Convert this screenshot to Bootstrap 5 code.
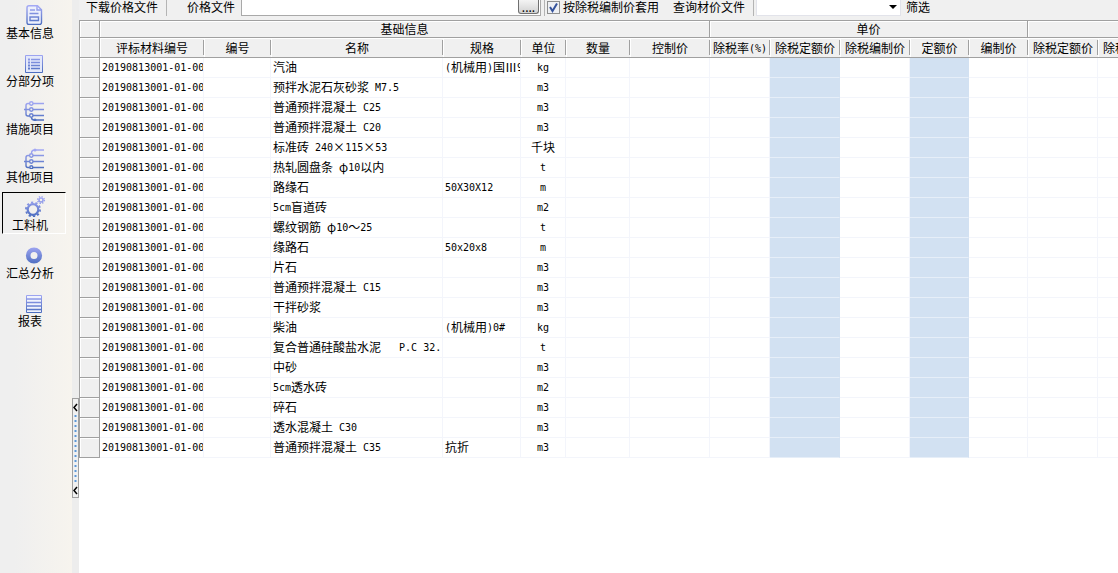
<!DOCTYPE html>
<html lang="zh-CN">
<head>
<meta charset="utf-8">
<meta name="viewport" content="width=device-width, initial-scale=1">
<title>工料机</title>
<link href="https://cdn.jsdelivr.net/npm/bootstrap@5.3.0/dist/css/bootstrap.min.css" rel="stylesheet">
<style>
  body { font-family: "Noto Sans CJK SC", sans-serif; font-size: 12px; line-height: 18px; color: #000; background: #fff; }
  .sidebar { width: 72px; background: linear-gradient(90deg, #efefef 20%, #f7f4ee); }
  .side-list { gap: 6px; }
  .side-btn { width: 64px; height: 42px; margin-left: 2px; padding: 0 8px 0 0; border: 1px solid transparent; background: none; color: #000; line-height: 16px; white-space: nowrap; }
  .side-btn svg { width: 24px; height: 24px; margin-left: 7px; flex: none; }
  .side-btn.current { border-color: #000 #fff #fff #000; }
  .splitter { width: 7px; background: #ededed; }
  .grip { width: 7px; height: 100px; margin-top: 398px; padding: 0; border: 1px solid #a0a0a0; background: #f0f0f0; }
  .grip svg { display: block; width: 5px; height: 98px; }
  .toolbar { height: 20px; padding-left: 7px; background: #f0f0f0; white-space: nowrap; line-height: 14px; }
  .toolbar > * { flex: none; }
  .tool-btn { padding: 0; border: 0; background: none; color: #000; line-height: 14px; }
  .divider { width: 1px; height: 16px; background: #b4b4b4; }
  .file-label { margin: 0 6px 0 20px; }
  .file-box { width: 300px; height: 16px; margin-right: 3px; background: #fff; border: 1px solid #a9a9a9; border-top: 0; }
  .file-box input { border: 0; outline: 0; min-width: 0; background: #fff; padding: 0 4px; }
  .browse { width: 21px; height: 14px; margin: 0 1px 0 0; padding: 0; line-height: 12px; border: 1px solid #707070; border-top: 0; border-radius: 0 0 3px 3px; background: linear-gradient(#f4f4f4, #d2d2d2); }
  .tick-label { margin: 0 14px 0 2px; }
  .tick { appearance: none; width: 13px; height: 13px; margin: 0 3px 0 0; border: 1px solid #8e8f8f; background: #eef0f4; }
  .tick:checked { background: #eef0f4 url("data:image/svg+xml,%3Csvg xmlns='http://www.w3.org/2000/svg' viewBox='0 0 11 11'%3E%3Cpath d='M2 5l2.500 4L9 1.500' fill='none' stroke='%2335539c' stroke-width='2'/%3E%3C/svg%3E"); }
  .price-select { width: 145px; height: 16px; margin: 0 5px 0 2px; padding: 0 4px; border: 1px solid #e2e3ea; border-top: 0; appearance: none; background: #fff url("data:image/svg+xml,%3Csvg xmlns='http://www.w3.org/2000/svg' viewBox='0 0 8 4'%3E%3Cpath d='M0 0h8L4 4z'/%3E%3C/svg%3E") no-repeat right 3px top 5px / 8px 4px; }
  .sheet { table-layout: fixed; width: 1089px; border-collapse: separate; border-spacing: 0; }
  .sheet th, .sheet td { height: 20px; padding: 0 2px; overflow: hidden; white-space: pre; line-height: 18px; font-weight: 400; border: 0 solid #f3f5fb; border-width: 0 1px 1px 0; }
  .sheet td { padding-bottom: 2px; line-height: 17px; }
  .sheet thead th, .sheet tbody th { background: #f0f0f0; border-color: #a0a0a0; box-shadow: inset 1px 1px #fff; text-align: center; }
  .sheet thead th { padding: 0; }
  .sheet thead tr:first-child th { height: 18px; line-height: 16px; border-top-width: 1px; }
  .sheet .corner, .sheet tbody th { border-left-width: 1px; }
  .sheet thead .field { border-right: 0; background: linear-gradient(#a0a0a0, #a0a0a0) no-repeat right 2px / 1px 15px #f0f0f0; }
  .sheet td.tinted { background: #d2e1f2; border-color: #d2e1f2; border-bottom-color: #e6eef8; }
  .narrow { font-family: "DejaVu Sans Mono", monospace; font-size: 10px; line-height: 10px; vertical-align: 1px; }
</style>
</head>
<body>
<div class="d-flex min-vh-100">
  <nav class="sidebar flex-shrink-0" aria-label="模块">
    <svg width="0" height="0" class="position-absolute" aria-hidden="true">
      <linearGradient id="ink" x1="0" y1="3" x2="0" y2="24" gradientUnits="userSpaceOnUse"><stop offset=".1" stop-color="#a3a8f4"/><stop offset="1" stop-color="#4a6cbe"/></linearGradient>
    </svg>
    <div class="side-list d-flex flex-column">
      <button class="side-btn d-flex flex-column align-items-center" type="button">
        <svg viewBox="0 0 24 24" fill="none" stroke="url(#ink)" stroke-width="1.400"><path fill="#eceffc" d="M7 4.700h8.500l4 4V21.500q0 2-2 2H7q-2 0-2-2V6.700q0-2 2-2z"/><path d="M8 9h5M7.500 12.500h9M8 16h8.500v3.500H8zM15 5v4h4"/></svg>基本信息</button>
      <button class="side-btn d-flex flex-column align-items-center" type="button">
        <svg viewBox="0 0 24 24" fill="none" stroke="url(#ink)"><path fill="#e3e8fa" d="M3.500 6.500h17v17h-17z"/><path stroke-width="1.400" d="M9 10.500h9M9 13.500h9M9 16.500h9M9 19.500h9"/><path stroke-width="2" d="M6 10.500h2M6 13.500h2M6 16.500h2M6 19.500h2"/></svg>分部分项</button>
      <button class="side-btn d-flex flex-column align-items-center" type="button">
        <svg viewBox="0 0 24 24" fill="none" stroke="url(#ink)" stroke-width="1.400"><path d="M7.500 6.500H6q-2 0-2 2v8.500q0 2 2 2h1.500M2 12.500h5.500M11 6.500h11M11 12.500h11M11 18.500h11M9.500 20.500q0 2.500 3 2.500h9.500"/><circle cx="9.300" cy="6.500" r="1.700"/><circle cx="9.300" cy="12.500" r="1.700"/><circle cx="9.300" cy="18.500" r="1.700"/><circle cx="13" cy="23" r=".8"/></svg>措施项目</button>
      <button class="side-btn d-flex flex-column align-items-center" type="button">
        <svg viewBox="0 0 24 24" fill="none" stroke="url(#ink)" stroke-width="1.400"><path d="M7.500 10.500H6q-2 0-2 2v8q0 2 2 2h1.500M2 16.500h5.500M11 10.500h11M11 16.500h11M11 22.500h11M9.500 8.500q0-3.500 3-3.500h9.500"/><circle cx="9.300" cy="10.500" r="1.700"/><circle cx="9.300" cy="16.500" r="1.700"/><circle cx="9.300" cy="22.200" r="1.500"/><circle cx="13" cy="5" r=".8"/></svg>其他项目</button>
      <button class="side-btn current d-flex flex-column align-items-center" type="button" aria-current="page">
        <svg viewBox="0 0 24 24" fill="none" stroke="url(#ink)"><circle cx="11" cy="16.500" r="5.300" stroke-width="2.200"/><circle cx="11" cy="16.500" r="7" stroke-width="2" stroke-dasharray="2.200 2.200"/><circle cx="19" cy="7" r="2" stroke-width="1.600"/><circle cx="19" cy="7" r="3.400" stroke-width="1.400" stroke-dasharray="1.340 1.340"/></svg>工料机</button>
      <button class="side-btn d-flex flex-column align-items-center" type="button">
        <svg viewBox="0 0 24 24" fill="none" stroke="url(#ink)"><circle cx="12" cy="14.500" r="5.800" stroke-width="4.600"/></svg>汇总分析</button>
      <button class="side-btn d-flex flex-column align-items-center" type="button">
        <svg viewBox="0 0 24 24" fill="none" stroke="url(#ink)"><path fill="#f0f3fd" d="M4.500 6.500h15v17h-15z"/><path stroke-width="1.300" d="M5 10h14M5 13.500h14M5 17h14M5 20.500h14"/></svg>报表</button>
    </div>
  </nav>
  <div class="splitter flex-shrink-0">
    <button class="grip d-block" type="button" aria-label="折叠侧栏">
      <svg viewBox="0 0 5 98" fill="none"><path stroke="#000" stroke-width="1.500" d="M4 5L1 8.500 4 12M4 88L1 91.500 4 95"/><path stroke="#5b97d8" stroke-width="2" stroke-dasharray="2 3" d="M2.500 16v68"/></svg>
    </button>
  </div>
  <main class="flex-fill overflow-hidden">
    <div class="toolbar d-flex align-items-start">
      <button class="tool-btn" type="button">下载价格文件</button>
      <span class="divider ms-2"></span>
      <label class="file-label" for="priceFile">价格文件</label>
      <div class="file-box d-flex">
        <input id="priceFile" class="flex-grow-1" type="text">
        <button class="browse" type="button" aria-label="浏览">....</button>
      </div>
      <span class="divider"></span>
      <label class="tick-label d-flex align-items-center"><input class="tick" type="checkbox" checked>按除税编制价套用</label>
      <button class="tool-btn me-2" type="button">查询材价文件</button>
      <span class="divider"></span>
      <select class="price-select" aria-label="材价文件"><option></option></select>
      <button class="tool-btn" type="button">筛选</button>
    </div>
    <table class="sheet">
      <colgroup>
        <col style="width:21px"><col style="width:104px"><col style="width:67px"><col style="width:172px"><col style="width:78px"><col style="width:45px"><col style="width:64px"><col style="width:80px"><col style="width:60px"><col style="width:70px"><col style="width:70px"><col style="width:59px"><col style="width:59px"><col style="width:70px"><col style="width:70px">
      </colgroup>
      <thead>
        <tr><th class="corner"></th><th colspan="7">基础信息</th><th colspan="5">单价</th><th colspan="2"></th></tr>
        <tr><th class="corner"></th><th class="field">评标材料编号</th><th class="field">编号</th><th class="field">名称</th><th class="field">规格</th><th class="field">单位</th><th class="field">数量</th><th class="field">控制价</th><th class="field">除税率<span class="narrow">(%)</span></th><th class="field">除税定额价</th><th class="field">除税编制价</th><th class="field">定额价</th><th class="field">编制价</th><th class="field">除税定额价</th><th class="field">除税编制价</th></tr>
      </thead>
      <tbody id="materials"></tbody>
    </table>
  </main>
</div>
<script src="https://cdn.jsdelivr.net/npm/bootstrap@5.3.0/dist/js/bootstrap.bundle.min.js"></script>
<script>
  const materials = [
    ['汽油', '(机械用)国Ⅲ9', 'kg'], ['预拌水泥石灰砂浆 M7.5', '', 'm3'], ['普通预拌混凝土 C25', '', 'm3'],
    ['普通预拌混凝土 C20', '', 'm3'], ['标准砖 240×115×53', '', '千块'], ['热轧圆盘条 φ10以内', '', 't'],
    ['路缘石', '50X30X12', 'm'], ['5cm盲道砖', '', 'm2'], ['螺纹钢筋 φ10～25', '', 't'], ['缘路石', '50x20x8', 'm'],
    ['片石', '', 'm3'], ['普通预拌混凝土 C15', '', 'm3'], ['干拌砂浆', '', 'm3'], ['柴油', '(机械用)0#', 'kg'],
    ['复合普通硅酸盐水泥   P.C 32.', '', 't'], ['中砂', '', 'm3'], ['5cm透水砖', '', 'm2'], ['碎石', '', 'm3'],
    ['透水混凝土 C30', '', 'm3'], ['普通预拌混凝土 C35', '抗折', 'm3']
  ];
  // Latin runs take the half-width face
  const face = s => s.replace(/[ -~]+/g, '<span class="narrow">$&</span>');
  document.getElementById('materials').innerHTML = materials.map(([name, spec, unit]) =>
    '<tr><th></th><td>' + face('20190813001-01-00') + '</td><td></td><td>' + face(name) + '</td><td>' + face(spec) +
    '</td><td class="text-center">' + face(unit) + '</td><td></td><td></td><td></td><td class="tinted"></td><td></td><td class="tinted"></td><td></td><td></td><td></td></tr>').join('');
</script>
</body>
</html>
